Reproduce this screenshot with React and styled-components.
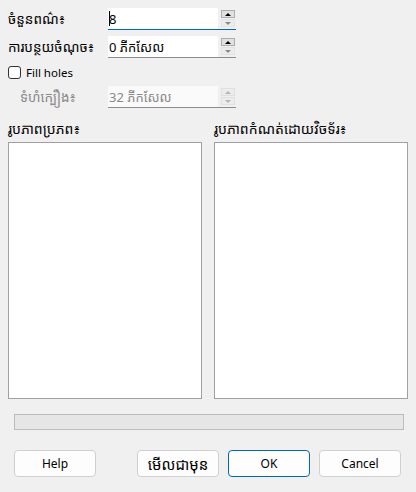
import React from "react"
import styled, { createGlobalStyle } from "styled-components"

const GlobalStyle = createGlobalStyle`
  html, body {
    margin: 0;
    padding: 0;
    background: #f0f0f0;
  }
  body {
    font-family: "Noto Sans", "Noto Sans Khmer", "Open Sans", sans-serif;
    font-size: 12px;
    color: #000;
  }
`

function SpinField({ value, disabled, focused }) {
  return (
    <Field $focused={focused}>
      <Input $disabled={disabled}>{value}</Input>
      <Spinner>
        <SpinButton $disabled={disabled} $top>
          <Arrow $disabled={disabled} />
        </SpinButton>
        <SpinButton $disabled={disabled}>
          <Arrow $disabled={disabled} $down />
        </SpinButton>
      </Spinner>
    </Field>
  )
}

export default function App() {
  return (
    <>
      <GlobalStyle />
      <Dialog>
        <Form>
          <Label>ចំនួនពណ៌៖</Label>
          <SpinField value={<><Caret />8</>} focused />
          <Label>ការបន្ថយចំណុច៖</Label>
          <SpinField value="0 ភីកសែល" />
          <CheckRow>
            <Box />
            <span>Fill holes</span>
          </CheckRow>
          <Label $indent $disabled>ទំហំក្បឿង៖</Label>
          <SpinField value="32 ភីកសែល" disabled />
        </Form>
        <Previews>
          <PreviewColumn>
            <Caption>រូបភាពប្រភព៖</Caption>
            <Panel />
          </PreviewColumn>
          <PreviewColumn>
            <Caption>រូបភាពកំណត់ដោយវិចទ័រ៖</Caption>
            <Panel />
          </PreviewColumn>
        </Previews>
        <Progress />
        <Buttons>
          <Button>Help</Button>
          <Spacer />
          <Button $khmer>មើលជាមុន</Button>
          <Button $primary>OK</Button>
          <Button>Cancel</Button>
        </Buttons>
      </Dialog>
    </>
  )
}

const Dialog = styled.div`
  width: 416px;
  height: 492px;
  box-sizing: border-box;
  padding: 8px 8px 0 8px;
  display: flex;
  flex-direction: column;
`
const Form = styled.div`
  display: grid;
  grid-template-columns: 100px 128px;
  grid-auto-rows: auto;
  row-gap: 6px;
  align-items: center;
`
const Label = styled.div`
  padding-left: ${(p) => (p.$indent ? "12px" : "0")};
  color: ${(p) => (p.$disabled ? "#8a8a8a" : "#000")};
  white-space: nowrap;
  line-height: 18px;
  font-size: 13.5px;
`
const Field = styled.div`
  display: flex;
  height: 22px;
  box-sizing: border-box;
  border-bottom: 1px solid ${(p) => (p.$focused ? "#0067c0" : "#8c8c8c")};
`
const Input = styled.div`
  flex: 1;
  background: ${(p) => (p.$disabled ? "#fafafa" : "#fff")};
  color: ${(p) => (p.$disabled ? "#8a8a8a" : "#000")};
  display: flex;
  align-items: center;
  padding-left: 1px;
  white-space: nowrap;
  font-size: 13px;
`
const Caret = styled.span`
  display: inline-block;
  width: 1px;
  height: 15px;
  background: #000;
  margin-right: -1px;
`
const Spinner = styled.div`
  width: 17px;
  display: flex;
  flex-direction: column;
  align-items: center;
  justify-content: center;
  gap: 1px;
  padding-left: 1px;
  background: #f0f0f0;
`
const SpinButton = styled.div`
  width: 14px;
  height: 8px;
  box-sizing: border-box;
  border: 1px solid ${(p) => (p.$disabled ? "#e0e0e0" : p.$top ? "#adadad" : "#e3e3e3")};
  background: ${(p) => (p.$top && !p.$disabled ? "#e1e1e1" : "#ececec")};
  display: flex;
  align-items: center;
  justify-content: center;
`
const Arrow = styled.div`
  width: 0;
  height: 0;
  border-left: 3px solid transparent;
  border-right: 3px solid transparent;
  ${(p) =>
    p.$down
      ? `border-top: 3px solid ${p.$disabled ? "#b5b5b5" : "#8a8a8a"};`
      : `border-bottom: 3px solid ${p.$disabled ? "#b5b5b5" : "#000"};`}
`
const CheckRow = styled.label`
  grid-column: 1 / span 2;
  display: flex;
  align-items: center;
  gap: 5px;
  height: 16px;
  font-size: 11.5px;
`
const Box = styled.span`
  width: 13px;
  height: 13px;
  box-sizing: border-box;
  border: 1px solid #333;
  border-radius: 3px;
  background: #fff;
`
const Previews = styled.div`
  display: grid;
  grid-template-columns: 194px 194px;
  column-gap: 12px;
  margin-top: 12px;
`
const PreviewColumn = styled.div`
  display: flex;
  flex-direction: column;
`
const Caption = styled.div`
  height: 22px;
  line-height: 18px;
  white-space: nowrap;
  font-size: 14px;
`
const Panel = styled.div`
  height: 257px;
  box-sizing: border-box;
  background: #fff;
  border: 1px solid #a0a0a0;
`
const Progress = styled.div`
  margin: 15px 4px 0 6px;
  height: 16px;
  box-sizing: border-box;
  border: 1px solid #bcbcbc;
  background: #e6e6e6;
`
const Buttons = styled.div`
  display: flex;
  gap: 9px;
  margin: 20px 7px 0 6px;
`
const Spacer = styled.div`
  flex: 1;
`
const Button = styled.div`
  width: 82px;
  height: 27px;
  box-sizing: border-box;
  border: 1px solid ${(p) => (p.$primary ? "#0067c0" : "#d0d0d0")};
  border-radius: 4px;
  background: #fdfdfd;
  display: flex;
  align-items: center;
  justify-content: center;
  white-space: nowrap;
  font-size: ${(p) => (p.$khmer ? "15px" : "12px")};
`
